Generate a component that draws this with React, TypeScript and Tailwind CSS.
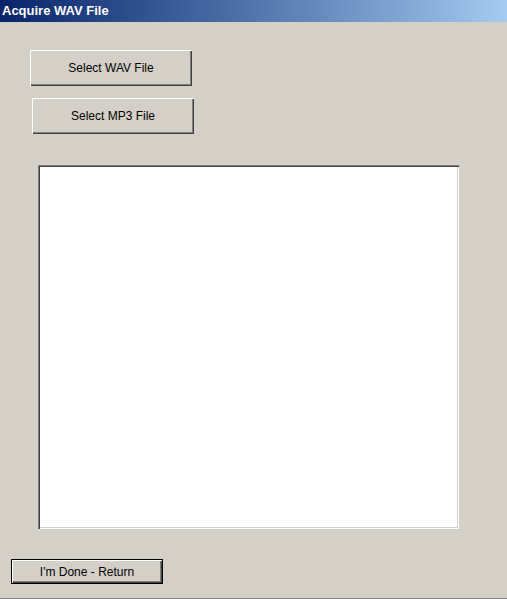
export default function App() {
  return (
    <div className="flex h-[599px] w-[507px] flex-col bg-[#d4d0c8] font-['Liberation_Sans',Arial,sans-serif] text-[12px] text-black">
      {/* caption bar */}
      <div className="flex h-[22px] items-center bg-gradient-to-r from-[#0a246a] to-[#a6caf0] pl-[2px] text-[13px] font-bold text-white">
        Acquire WAV File
      </div>

      <button className="ml-[30px] mt-[28px] h-[36px] w-[162px] bg-[#d4d0c8] shadow-[inset_1px_1px_#ffffff,inset_-1px_-1px_#404040,inset_-2px_-2px_#808080]">
        Select WAV File
      </button>
      <button className="ml-[32px] mt-[12px] h-[36px] w-[162px] bg-[#d4d0c8] shadow-[inset_1px_1px_#ffffff,inset_-1px_-1px_#404040,inset_-2px_-2px_#808080]">
        Select MP3 File
      </button>

      {/* file list */}
      <div className="ml-[38px] mt-[31px] h-[364px] w-[421px] bg-white shadow-[inset_1px_1px_#808080,inset_2px_2px_#404040,inset_-1px_-1px_#ffffff,inset_-2px_-2px_#d4d0c8]" />

      <button className="ml-[11px] mt-[30px] h-[25px] w-[152px] border border-black bg-[#d4d0c8] shadow-[inset_1px_1px_#ffffff,inset_-1px_-1px_#404040,inset_-2px_-2px_#808080]">
        I'm Done - Return
      </button>

      <div className="mt-auto h-px bg-[#808080]" />
    </div>
  );
}
